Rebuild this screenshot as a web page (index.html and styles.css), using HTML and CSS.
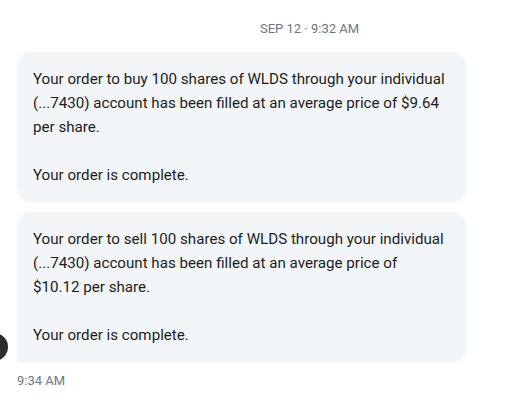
FILE: index.html
```html
<!DOCTYPE html>
<html>
<head>
<meta charset="utf-8">
<link rel="stylesheet" href="styles.css">
</head>
<body>
<div class="thread">
  <div class="stamp">SEP 12 · 9:32 AM</div>
  <div class="bubbles">
    <div class="bubble">
      <p>Your order to buy 100 shares of WLDS through your individual (...7430) account has been filled at an average price of $9.64 per share.</p>
      <p>Your order is complete.</p>
    </div>
    <div class="bubble last">
      <p>Your order to sell 100 shares of WLDS through your individual (...7430) account has been filled at an average price of<br>$10.12 per share.</p>
      <p>Your order is complete.</p>
      <span class="avatar"></span>
    </div>
  </div>
  <div class="time">9:34 AM</div>
</div>
</body>
</html>
```
FILE: styles.css
```css
html, body {
  margin: 0;
  padding: 0;
  background: #ffffff;
}
.thread {
  font-family: Roboto, "Noto Sans", sans-serif;
  padding: 21px 0 0 17px;
}
.stamp {
  font-size: 13px;
  line-height: 16px;
  color: #6e7681;
  padding-left: 243px;
}
.bubbles {
  display: flex;
  flex-direction: column;
  gap: 8px;
  margin-top: 14px;
}
.bubble {
  position: relative;
  width: 418px;
  padding: 16px;
  background: #f3f6f9;
  border-radius: 16px;
  color: #1b1d21;
  font-size: 15.15px;
  line-height: 24px;
}
.bubble.last {
  border-bottom-left-radius: 0;
}
.bubble p {
  margin: 0;
}
.bubble p + p {
  margin-top: 24px;
}
.avatar {
  position: absolute;
  left: -37px;
  bottom: 2px;
  width: 28px;
  height: 28px;
  border-radius: 50%;
  background: #2b2d31;
}
.time {
  margin-top: 10px;
  font-size: 13px;
  line-height: 16px;
  color: #6e7681;
}
```
